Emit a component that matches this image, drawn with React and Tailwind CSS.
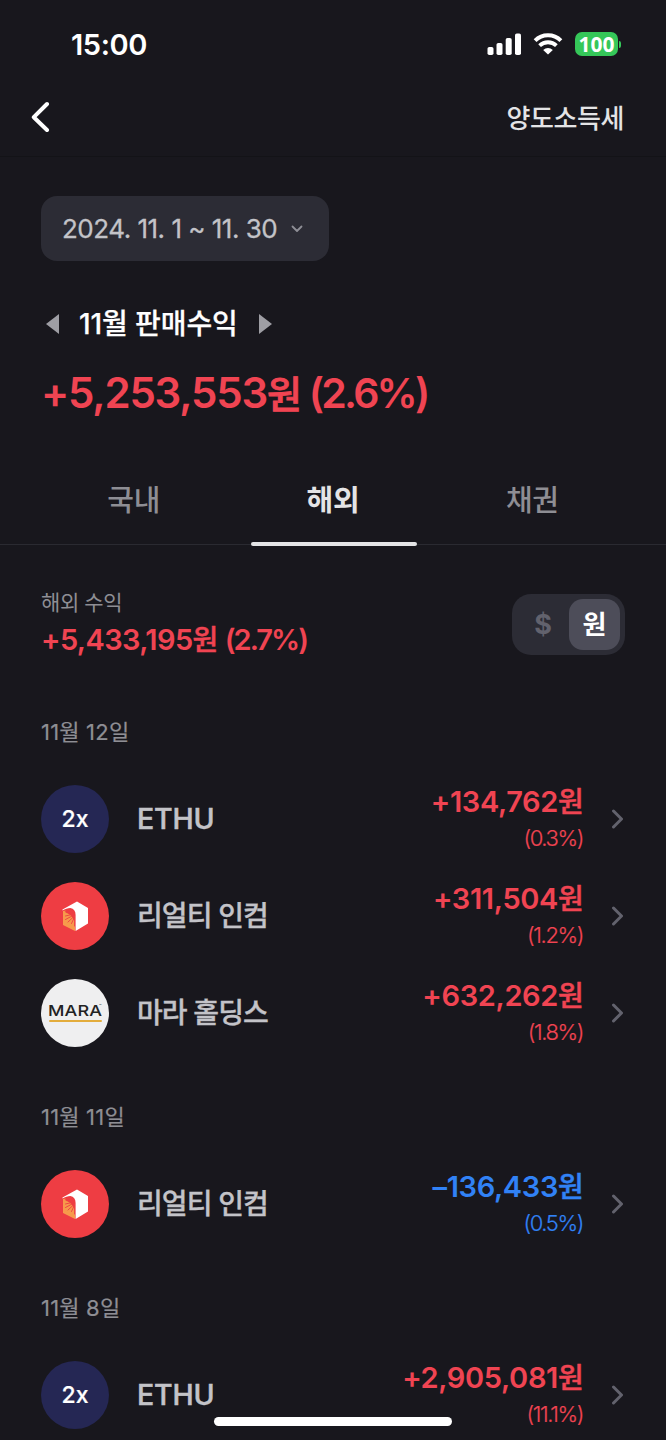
import React from "react";

const GROUPS = [
  {
    date: "11월 12일",
    items: [
      { logo: "ethu", name: "ETHU", amount: "+134,762", rate: "(0.3%)" },
      { logo: "realty", name: "리얼티 인컴", amount: "+311,504", rate: "(1.2%)" },
      { logo: "mara", name: "마라 홀딩스", amount: "+632,262", rate: "(1.8%)" },
    ],
  },
  {
    date: "11월 11일",
    items: [
      { logo: "realty", name: "리얼티 인컴", amount: "–136,433", rate: "(0.5%)", loss: true },
    ],
  },
  {
    date: "11월 8일",
    items: [
      { logo: "ethu", name: "ETHU", amount: "+2,905,081", rate: "(11.1%)" },
    ],
  },
];

const TABS = ["국내", "해외", "채권"];

function StatusBar() {
  return (
    <div className="flex h-[88px] shrink-0 items-center justify-between pl-[71px] pr-[45px] text-white">
      <span className="text-[29px] font-semibold leading-none tracking-[-0.4px]">15:00</span>
      <div className="flex items-center">
        <svg className="mr-[12px]" width="34" height="22" viewBox="0 0 34 22" fill="currentColor">
          <rect x="0.5" y="14" width="6" height="8" rx="1.8" />
          <rect x="9.5" y="10" width="6" height="12" rx="1.8" />
          <rect x="18.7" y="5" width="6" height="17" rx="1.8" />
          <rect x="28" y="0.5" width="6" height="21.5" rx="1.8" />
        </svg>
        <svg className="mr-[12px]" width="30" height="22" viewBox="0 0 30 22" fill="none" stroke="currentColor">
          <path d="M2.1 7.6a18.3 18.3 0 0 1 25.8 0" strokeWidth="4" />
          <path d="M6.6 12.7a12 12 0 0 1 16.8 0" strokeWidth="3.8" />
          <path d="M10.2 16.9a7 7 0 0 1 9.6 0L15 21.6z" fill="currentColor" stroke="none" />
        </svg>
        <div className="flex h-[24px] w-[43px] items-center justify-center rounded-[7px] bg-[#35c759]">
          <span className="font-['Open_Sans',sans-serif] text-[21px] font-bold leading-none">100</span>
        </div>
        <div className="ml-[1px] h-[7px] w-[2px] rounded-r-full bg-[#35c759]" />
      </div>
    </div>
  );
}

function Header() {
  return (
    <header className="flex h-[69px] shrink-0 items-center justify-between border-b border-[#131317] pb-[8px] pl-[31px] pr-[42px]">
      <svg className="-mt-[3px]" width="19" height="32" viewBox="0 0 19 32" fill="none" stroke="#fff" strokeWidth="4" strokeLinecap="round" strokeLinejoin="round">
        <path d="M16 3 2.8 16.2 16 29" />
      </svg>
      <span className="mt-[2px] text-[26px] font-medium leading-none tracking-[-0.4px] text-[#e4e4e6]">양도소득세</span>
    </header>
  );
}

function RealtyLogo() {
  return (
    <svg width="68" height="68" viewBox="0 0 68 68">
      <circle cx="34" cy="34" r="34" fill="#ee3d43" />
      <path d="M22 29 29 27.500 34 35v14L22 43z" fill="#f79a4b" />
      <path d="M23.500 29 28.500 26.500 33.500 30v9l-3-5z" fill="#ee3d43" />
      <path
        d="M33 32 25 30.500M33 32 24.500 34M33 33 24.500 37.500M33.500 34 27 40M33.500 35 30.500 41.500M33.500 35v9"
        stroke="#ee3d43"
        strokeWidth="0.9"
        strokeLinecap="round"
      />
      <path d="M21.500 27.500 36 19.500 47 26v15.500L34.600 49V33c0-3.800-1.800-6.200-5.300-6.900-2.500.2-5.200.8-7.800 2.400z" fill="#fff" />
    </svg>
  );
}

function Logo({ type }) {
  if (type === "realty") return <RealtyLogo />;
  if (type === "mara") {
    return (
      <div className="flex size-[68px] flex-col items-center rounded-full bg-[#efeff0] pt-[23px]">
        <div className="flex h-[18px] w-[54px] items-start text-[#222]">
          <span className="w-[51px] origin-left scale-x-120 text-[15px] font-medium leading-[17px] tracking-[0.1px]">MARA</span>
          <span className="w-[3px] text-[4px] leading-[8px]">™</span>
        </div>
        <div className="h-[2px] w-[53px] rounded-full bg-[#e3ac3c]" />
      </div>
    );
  }
  return (
    <div className="flex size-[68px] items-center justify-center rounded-full bg-[#252754]">
      <span className="mt-[2px] text-[23px] font-medium leading-none text-white [-webkit-text-stroke:0.2px]">2x</span>
    </div>
  );
}

function TradeRow({ item }) {
  return (
    <div className="flex h-[97px] items-center pl-[41px] pr-[42px]">
      <Logo type={item.logo} />
      <span
        className={`ml-[28px] flex-1 font-medium leading-[36px] text-[#c3c3c8] ${
          item.name === "ETHU"
            ? "text-[28.5px] tracking-[-0.2px] [-webkit-text-stroke:0.5px]"
            : "text-[28px] tracking-[-0.9px] [-webkit-text-stroke:0.35px]"
        }`}
      >
        {item.name}
      </span>
      <div className={`flex flex-col items-end ${item.loss ? "text-[#3182f6]" : "text-[#f04452]"}`}>
        <span className="text-[29px] font-semibold leading-[38px] tracking-[-0.35px]">
          {item.amount}
          <span className="text-[28px] font-medium tracking-[-0.8px] [-webkit-text-stroke:0.5px]">원</span>
        </span>
        <span className="text-[22px] font-light leading-[34px] tracking-[-1.4px] [-webkit-text-stroke:0.2px]">{item.rate}</span>
      </div>
      <svg className="ml-[28px]" width="13" height="20" viewBox="0 0 13 20" fill="none" stroke="#62626d" strokeWidth="3" strokeLinecap="round" strokeLinejoin="round">
        <path d="M2.5 2 10.5 10 2.5 18" />
      </svg>
    </div>
  );
}

export default function App() {
  return (
    <div className="relative flex h-[1440px] w-[666px] flex-col overflow-hidden bg-[#18171d] font-['Inter','Noto_Sans_CJK_KR',sans-serif]">
      <StatusBar />
      <Header />

      <section className="flex h-[289px] shrink-0 flex-col items-start pl-[41px] pt-[39px]">
        <button className="flex h-[65px] w-[288px] items-center rounded-[16px] bg-[#2c2c35] pl-[21px] text-[26px] tracking-[-0.5px] text-[#c3c3c8]">
          <span className="[-webkit-text-stroke:0.3px]">2024. 11. 1 ~ 11. 30</span>
          <svg className="ml-[14px]" width="12" height="8" viewBox="0 0 12 8" fill="none" stroke="#8e8e96" strokeWidth="1.8" strokeLinecap="round" strokeLinejoin="round">
            <path d="M1.5 1.5 6 6 10.5 1.5" />
          </svg>
        </button>

        <div className="mt-[45px] flex h-[36px] items-center pl-[5px]">
          <svg width="13" height="20" viewBox="0 0 13 20" fill="#9e9ea4">
            <path d="M13 0v20L0 10z" />
          </svg>
          <h1 className="ml-[20px] mr-[21px] text-[28px] font-medium leading-[36px] tracking-[-0.1px] text-white [-webkit-text-stroke:0.25px]">
            11월 판매수익
          </h1>
          <svg width="13" height="20" viewBox="0 0 13 20" fill="#9e9ea4">
            <path d="M0 0v20l13-10z" />
          </svg>
        </div>

        <p className="mt-[25px] whitespace-nowrap text-[42px] font-semibold leading-[52px] tracking-[-1.2px] text-[#f04452]">
          +5,253,553
          <span className="text-[38px] font-medium [-webkit-text-stroke:0.8px]">원</span>
          <span className="ml-[8px] text-[41px] tracking-[-2.8px]">(2.6%)</span>
        </p>
      </section>

      <nav className="flex h-[99px] shrink-0 border-b border-[#2a2a31] px-[34px]">
        {TABS.map((tab) => (
          <button
            key={tab}
            className={`relative flex-1 pt-[11px] text-[29px] tracking-[-0.3px] ${
              tab === "해외" ? "font-bold text-[#e4e4e6]" : "font-medium text-[#8e8e94]"
            }`}
          >
            {tab}
            {tab === "해외" && (
              <span className="absolute -bottom-[2px] left-[18px] h-[4px] w-[166px] rounded-full bg-[#e4e4e6]" />
            )}
          </button>
        ))}
      </nav>

      <section className="flex h-[130px] shrink-0 items-start justify-between pl-[41px] pr-[41px] pt-[42px]">
        <div className="flex flex-col pt-[1px]">
          <span className="text-[21px] leading-[30px] tracking-[-0.4px] text-[#8e8e94]">해외 수익</span>
          <span className="mt-[1px] whitespace-nowrap text-[29px] font-semibold leading-[42px] tracking-[-0.6px] text-[#f04452]">
            +5,433,195
            <span className="text-[28px] font-medium [-webkit-text-stroke:0.5px]">원</span>
            <span className="ml-[7px] tracking-[-2px]">(2.7%)</span>
          </span>
        </div>
        <div className="mt-[7px] flex h-[61px] w-[113px] items-center rounded-[19px] bg-[#2c2c35] p-[5px]">
          <span className="flex-1 pt-[2px] text-center text-[27px] font-bold text-[#62626d]">$</span>
          <span className="flex size-[51px] items-center justify-center rounded-[14px] bg-[#4d4d59] text-[26px] font-bold text-white">
            원
          </span>
        </div>
      </section>

      {GROUPS.map((group, i) => (
        <section key={group.date} className="shrink-0">
          <h2 className={`pb-[23px] pl-[41px] text-[22px] font-normal leading-[30px] tracking-[0.2px] text-[#8e8e94] [-webkit-text-stroke:0.2px] ${i === 0 ? "pt-[42px]" : "pt-[41px]"}`}>
            {group.date}
          </h2>
          {group.items.map((item) => (
            <TradeRow key={item.name} item={item} />
          ))}
        </section>
      ))}

      <div className="absolute bottom-[14px] left-[214px] h-[9px] w-[238px] rounded-full bg-white" />
    </div>
  );
}
